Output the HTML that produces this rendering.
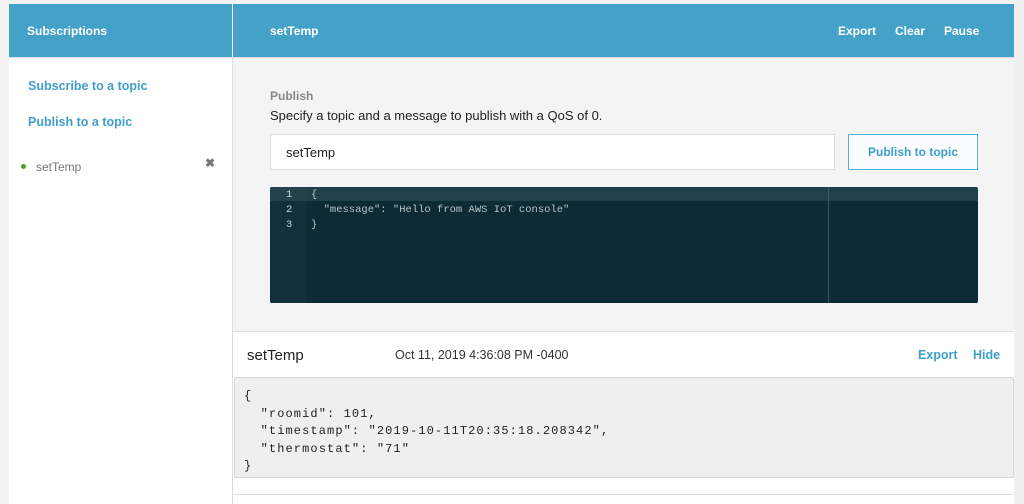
<!DOCTYPE html>
<html><head><style>
*{margin:0;padding:0;box-sizing:border-box}
body{width:1024px;height:504px;background:#f2f2f2;font-family:"Liberation Sans",sans-serif;position:relative;overflow:hidden}
.a{position:absolute}
.hdr{background:#44a1c8;color:#fff;font-weight:bold;font-size:12px}
.link{color:#3f9fc9;font-weight:bold;font-size:12.5px}
.mono{font-family:"Liberation Mono",monospace}
</style></head><body>
<div class="a hdr" style="left:9px;top:4px;width:223px;height:53px;"><span class="a" style="left:18px;top:20px">Subscriptions</span></div>
<div class="a hdr" style="left:233px;top:4px;width:781px;height:53px;">
<span class="a" style="left:37px;top:20px">setTemp</span>
<span class="a" style="left:605px;top:20px">Export</span>
<span class="a" style="left:662px;top:20px">Clear</span>
<span class="a" style="left:711px;top:20px">Pause</span></div>
<div class="a" style="left:9px;top:57px;width:223px;height:447px;background:#fff;border-top:1px solid #ddd"></div>
<div class="a link" style="left:28px;top:79px">Subscribe to a topic</div>
<div class="a link" style="left:28px;top:115px">Publish to a topic</div>
<div class="a" style="left:21px;top:164px;width:5px;height:5px;border-radius:50%;background:#4a9e2f"></div>
<div class="a" style="left:36px;top:160px;font-size:12px;color:#777">setTemp</div>
<div class="a" style="left:205px;top:156px;font-size:12px;color:#777;font-weight:bold">✖</div>
<div class="a" style="left:232px;top:57px;width:1px;height:447px;background:#ddd"></div>
<div class="a" style="left:233px;top:57px;width:781px;height:275px;background:#f4f4f4;border-top:1px solid #ddd;border-bottom:1px solid #ddd"></div>
<div class="a" style="left:270px;top:89px;font-size:12px;font-weight:bold;color:#888">Publish</div>
<div class="a" style="left:270px;top:108px;font-size:13px;color:#222">Specify a topic and a message to publish with a QoS of 0.</div>
<div class="a" style="left:270px;top:134px;width:565px;height:36px;background:#fff;border:1px solid #ddd;padding:10px 0 0 15px;font-size:13px;color:#222">setTemp</div>
<div class="a link" style="left:848px;top:134px;width:130px;height:36px;border:1px solid #5aaed6;background:#fafcfd;text-align:center;line-height:34px;font-size:12px">Publish to topic</div>
<div class="a" style="left:270px;top:187px;width:708px;height:116px;background:#0e2a35;border-radius:2px;overflow:hidden">
<div class="a" style="left:0;top:0;width:37px;height:116px;background:#132f3a"></div>
<div class="a" style="left:0;top:0;width:708px;height:14px;background:rgba(60,90,100,.45)"></div>
<div class="a" style="left:558px;top:0;width:1px;height:116px;background:#3b5560"></div>
<div class="a mono" style="left:16px;top:1px;font-size:10.5px;line-height:15px;color:#c8d4d8">1<br>2<br>3</div>
<div class="a mono" style="left:41px;top:1px;font-size:10.5px;line-height:15px;color:#b4c2c6;white-space:pre">{
  "message": "Hello from AWS IoT console"
}</div></div>
<div class="a" style="left:233px;top:332px;width:781px;height:172px;background:#fff"></div>
<div class="a" style="left:247px;top:347px;font-size:15px;color:#222">setTemp</div>
<div class="a" style="left:395px;top:348px;font-size:12.5px;color:#333">Oct 11, 2019 4:36:08 PM -0400</div>
<div class="a link" style="left:918px;top:348px">Export</div>
<div class="a link" style="left:973px;top:348px">Hide</div>
<div class="a" style="left:234px;top:377px;width:780px;height:101px;background:#efefef;border:1px solid #d8d8d8;border-radius:2px"></div>
<div class="a mono" style="left:244px;top:388px;font-size:12px;letter-spacing:1.1px;line-height:17.5px;color:#222;white-space:pre">{
  "roomid": 101,
  "timestamp": "2019-10-11T20:35:18.208342",
  "thermostat": "71"
}</div>
<div class="a" style="left:233px;top:494px;width:781px;height:1px;background:#ddd"></div>
<div class="a" style="left:1014px;top:0;width:10px;height:504px;background:#f0f0f0"></div>
</body></html>
